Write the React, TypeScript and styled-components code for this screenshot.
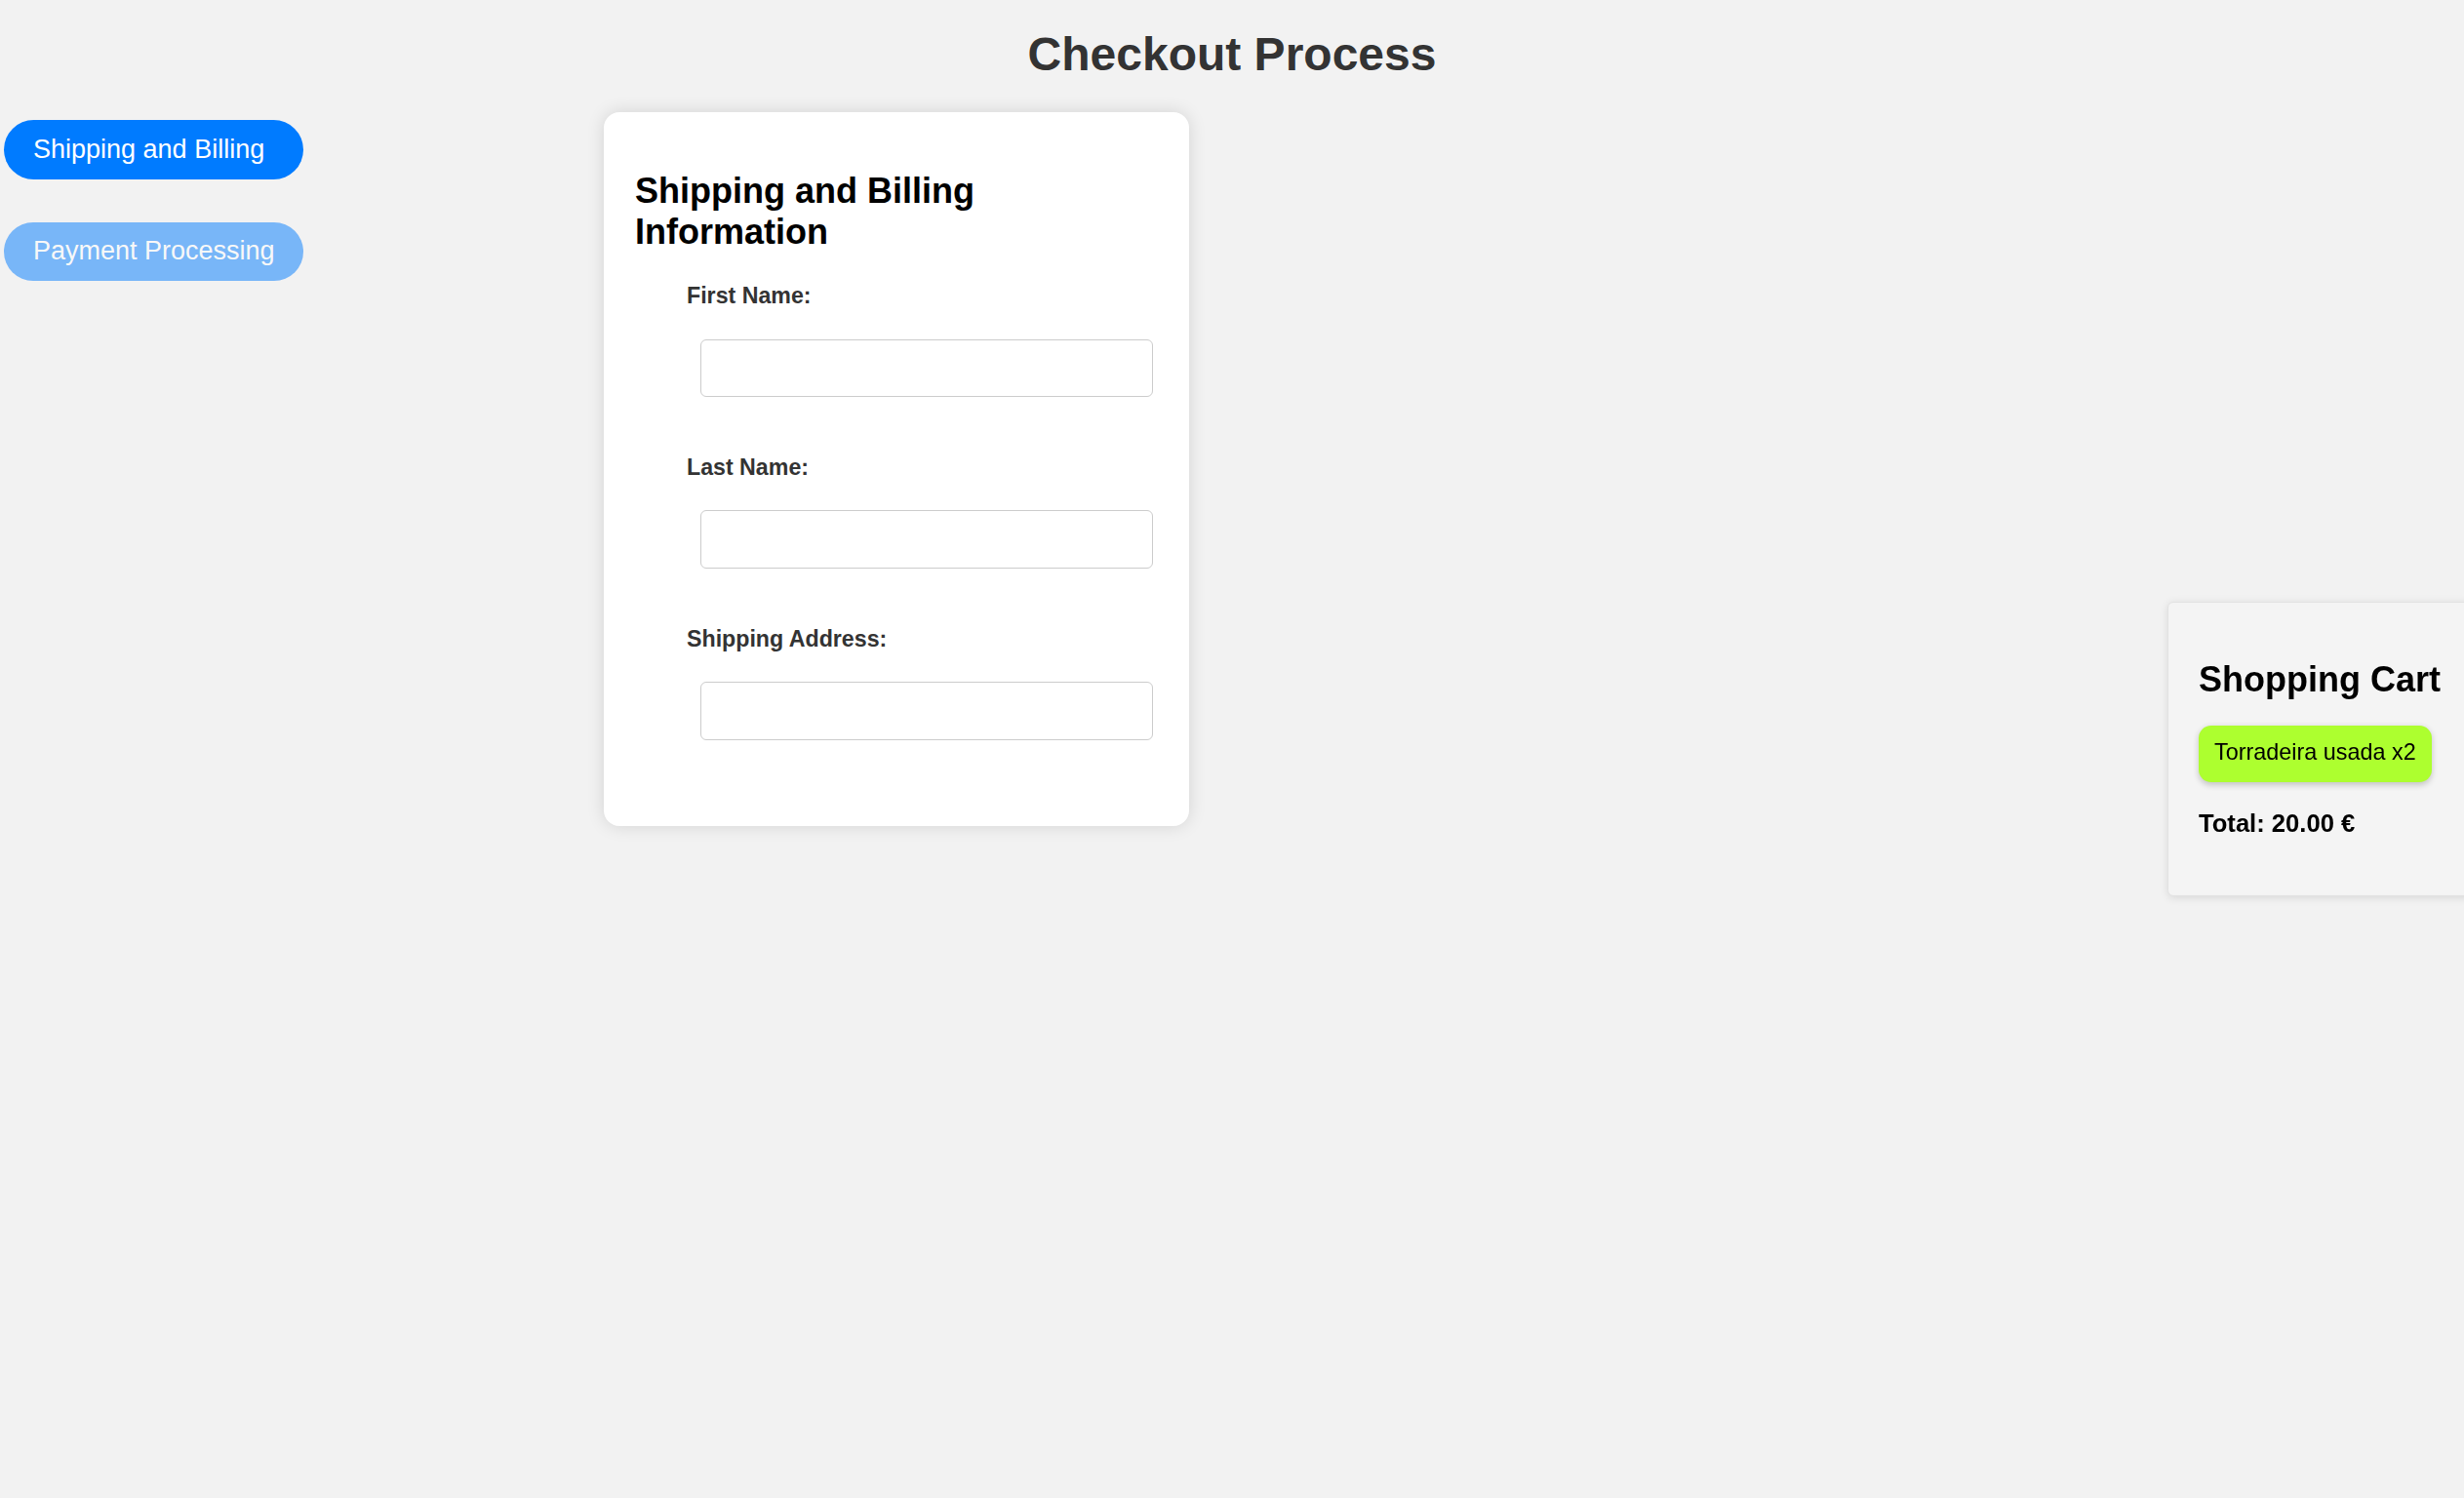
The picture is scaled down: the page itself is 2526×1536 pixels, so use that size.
import React from "react";
import styled, { createGlobalStyle } from "styled-components";

const GlobalStyle = createGlobalStyle`
  html, body {
    margin: 0;
    padding: 0;
    background: #f2f2f2;
    font-family: "Liberation Sans", Arial, Helvetica, sans-serif;
    overflow: hidden;
  }
  * { box-sizing: border-box; }
`;

const Page = styled.div`
  min-height: 100vh;
`;

const Title = styled.h1`
  margin: 28px 0 31.8px;
  text-align: center;
  font-size: 48px;
  line-height: 55.2px;
  font-weight: bold;
  color: #333;
`;

const Main = styled.div`
  display: grid;
  grid-template-columns: 619px 600px;
  align-items: start;
`;

const Sidebar = styled.nav`
  display: flex;
  flex-direction: column;
  align-items: flex-start;
  gap: 44px;
  padding: 8px 0 0 4px;
`;

const StepButton = styled.button<{ $active?: boolean }>`
  display: flex;
  align-items: center;
  width: 307px;
  height: 60.6px;
  padding: 0 20px 0 30px;
  border: none;
  border-radius: 31px;
  background: #007bff;
  color: #fff;
  font-family: inherit;
  font-size: 27px;
  line-height: 31px;
  text-align: left;
  white-space: nowrap;
  cursor: pointer;
  opacity: ${(p) => (p.$active ? 1 : 0.5)};
`;

const Card = styled.section`
  background: #fff;
  border-radius: 16px;
  box-shadow: 0 0 18px rgba(0, 0, 0, 0.13);
  padding: 32px 37px 29.4px 32px;
`;

const CardTitle = styled.h2`
  margin: 28px 0 30.4px;
  font-size: 36px;
  line-height: 42.4px;
  font-weight: bold;
  color: #000;
`;

const Form = styled.form`
  padding-left: 53px;
`;

const FieldGroup = styled.div`
  margin-bottom: 59px;
`;

const Label = styled.label`
  display: block;
  font-size: 23.2px;
  line-height: 26.4px;
  font-weight: bold;
  color: #333;
`;

const Input = styled.input`
  display: block;
  margin: 31px 0 0 14px;
  width: 464px;
  height: 59.4px;
  padding: 0 12px;
  border: 1px solid #ccc;
  border-radius: 6px;
  background: #fff;
  font-family: inherit;
  font-size: 23px;
  outline: none;
`;

const CartPanel = styled.aside`
  position: fixed;
  top: 50%;
  left: calc(100% - 304px);
  transform: translateY(-50%);
  background: #f4f4f4;
  border: 1px solid #e2e2e2;
  border-radius: 6px;
  box-shadow: 0 2px 8px rgba(0, 0, 0, 0.1);
  padding: 32px 32px 32px 31px;
`;

const CartTitle = styled.h2`
  margin: 26px 0 25.9px;
  font-size: 36px;
  line-height: 42.4px;
  font-weight: bold;
  color: #000;
  white-space: nowrap;
`;

const CartItem = styled.div`
  display: inline-block;
  background: #adff2f;
  padding: 14.2px 16px 16.6px;
  border-radius: 12.8px;
  font-size: 23.4px;
  line-height: 26.9px;
  color: #000;
  white-space: nowrap;
  box-shadow: 0 3px 6px rgba(0, 0, 0, 0.2);
`;

const Total = styled.p`
  margin: 28.5px 0 26.2px;
  font-size: 25.6px;
  line-height: 29.4px;
  font-weight: bold;
  color: #000;
`;

const fields = [
  { id: "firstName", label: "First Name:" },
  { id: "lastName", label: "Last Name:" },
  { id: "address", label: "Shipping Address:" },
];

export default function App() {
  return (
    <Page>
      <GlobalStyle />
      <Title>Checkout Process</Title>
      <Main>
        <Sidebar>
          <StepButton $active>Shipping and Billing</StepButton>
          <StepButton>Payment Processing</StepButton>
        </Sidebar>
        <Card>
          <CardTitle>Shipping and Billing Information</CardTitle>
          <Form onSubmit={(e) => e.preventDefault()}>
            {fields.map((f) => (
              <FieldGroup key={f.id}>
                <Label htmlFor={f.id}>{f.label}</Label>
                <Input id={f.id} type="text" />
              </FieldGroup>
            ))}
          </Form>
        </Card>
      </Main>
      <CartPanel>
        <CartTitle>Shopping Cart</CartTitle>
        <CartItem>Torradeira usada x2</CartItem>
        <Total>Total: 20.00 €</Total>
      </CartPanel>
    </Page>
  );
}
